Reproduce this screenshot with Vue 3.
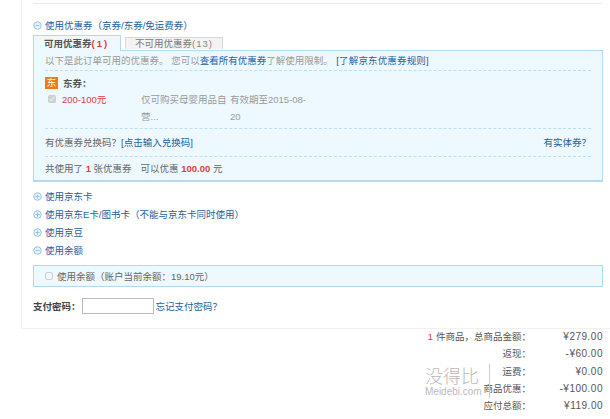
<script setup>
const collapsed = [
  { label: '使用京东卡', open: false },
  { label: '使用京东E卡/图书卡（不能与京东卡同时使用）', open: false },
  { label: '使用京豆', open: false },
  { label: '使用余额', open: true },
]
const totals = [
  { label: '件商品，总商品金额：', count: 1, value: '¥279.00' },
  { label: '返现：', value: '-¥60.00' },
  { label: '运费：', value: '¥0.00' },
  { label: '商品优惠：', value: '-¥100.00' },
  { label: '应付总额：', value: '¥119.00' },
]
</script>

<template>
  <div class="page">
    <div class="card">
      <div class="top-line"></div>

      <div class="toggle first">
        <svg class="sign" viewBox="0 0 10 10"><circle cx="5" cy="5" r="4.2" /><path d="M2.8 5h4.4" /></svg>
        <a>使用优惠券（京券/东券/免运费券）</a>
      </div>

      <div class="tabs">
        <div class="tab active">可用优惠券<b>(1)</b></div>
        <div class="tab">不可用优惠券<span>(13)</span></div>
      </div>

      <div class="panel">
        <div class="row intro">
          以下是此订单可用的优惠券。 您可以<a>查看所有优惠券</a>了解使用限制。 <a class="rules">[了解京东优惠券规则]</a>
        </div>
        <div class="row coupons">
          <div class="coupon-title"><span class="badge">东</span><strong>东券：</strong></div>
          <div class="coupon">
            <input type="checkbox" checked disabled />
            <span class="amount">200-100元</span>
            <span class="desc">仅可购买母婴用品自营...</span>
            <span class="expire">有效期至2015-08-20</span>
          </div>
        </div>
        <div class="row exchange">
          <span>有优惠券兑换码？<a>[点击输入兑换码]</a></span>
          <a>有实体券？</a>
        </div>
        <div class="summary">
          共使用了 <em>1</em> 张优惠券<span class="saving">可以优惠 <em>100.00</em> 元</span>
        </div>
      </div>

      <div class="toggles">
        <div v-for="item in collapsed" :key="item.label" class="toggle">
          <svg class="sign" viewBox="0 0 10 10">
            <circle cx="5" cy="5" r="4.2" />
            <path :d="item.open ? 'M2.8 5h4.4' : 'M2.8 5h4.4M5 2.8v4.4'" />
          </svg>
          <a>{{ item.label }}</a>
        </div>
      </div>

      <div class="balance">
        <input type="checkbox" disabled />
        <span>使用余额（账户当前余额：19.10元）</span>
      </div>

      <div class="password">
        <strong>支付密码：</strong>
        <input type="text" />
        <a>忘记支付密码？</a>
      </div>
    </div>

    <div class="totals">
      <div v-for="row in totals" :key="row.label" class="total-row">
        <span class="total-label"><i v-if="row.count">{{ row.count }}</i>{{ row.label }}</span>
        <span class="total-value">{{ row.value }}</span>
      </div>
      <div class="watermark">
        <div class="wm-brand">没得比</div>
        <div class="wm-url">Meidebi.com</div>
      </div>
    </div>
  </div>
</template>

<style>
html,
body {
  margin: 0;
  background: #fff;
  overflow: hidden;
}
</style>

<style scoped>
.page {
  width: 610px;
  height: 419px;
  overflow: hidden;
  box-sizing: border-box;
  font-family: "Liberation Sans", "Noto Sans CJK SC", sans-serif;
  font-size: 9.5px;
  color: #666;
}

a {
  color: #1d5f9e;
}

.card {
  box-sizing: border-box;
  width: 603px;
  height: 329px;
  margin-left: 21px;
  padding: 3px 0 0 11px;
  border-left: 1px solid #f2f2f2;
  border-bottom: 1px solid #f0f0f0;
}

.top-line {
  height: 1px;
  width: 568px;
  margin-left: 1px;
  background: #e8e8e8;
}

.toggle {
  display: flex;
  align-items: center;
  gap: 3px;
  height: 18px;
}

.toggle.first {
  margin-top: 12px;
}

.sign {
  width: 9px;
  height: 9px;
  fill: #e4f2fa;
  stroke: #8fc0dc;
  stroke-width: 1;
}

.tabs {
  display: flex;
  align-items: flex-end;
  gap: 4px;
  height: 16px;
  position: relative;
  z-index: 1;
}

.tab {
  box-sizing: border-box;
  width: 98px;
  height: 12px;
  line-height: 12px;
  margin-bottom: 1px;
  padding-left: 9px;
  background: #f3f3f3;
  border: 1px solid #d8d8d8;
  border-bottom: 0;
  color: #777;
}

.tab span {
  color: #888;
  letter-spacing: 1px;
}

.tab.active {
  width: 88px;
  height: 16px;
  line-height: 15px;
  margin-bottom: -1px;
  padding-left: 10px;
  background: #edf9fe;
  border: 1px solid #b5d9ee;
  border-bottom: 0;
  color: #555;
  font-weight: 700;
}

.tab b {
  color: #e4393c;
  letter-spacing: 2px;
}

.panel {
  box-sizing: border-box;
  width: 570px;
  height: 132px;
  padding: 0 11px;
  background: #edf9fe;
  border: 1px solid #b5d9ee;
  border-bottom-width: 2px;
}

.row {
  border-bottom: 1px dashed #b9e0f3;
}

.intro {
  height: 19px;
  line-height: 20px;
  color: #999;
}

.rules {
  margin-left: 1px;
  letter-spacing: 0.15px;
}

.coupons {
  height: 57px;
}

.coupon-title {
  box-sizing: border-box;
  display: flex;
  align-items: center;
  gap: 5px;
  height: 20px;
  padding-top: 3px;
}

.badge {
  width: 13px;
  height: 12px;
  line-height: 12px;
  text-align: center;
  background: #f37a17;
  color: #fff;
}

.coupon-title strong {
  color: #555;
}

.coupon {
  display: flex;
  line-height: 17px;
}

.coupon input {
  width: 8px;
  height: 8px;
  margin: 4px 6px 0 3px;
}

.amount {
  width: 79px;
  color: #e4393c;
}

.desc {
  width: 89px;
  color: #999;
}

.expire {
  width: 82px;
  color: #999;
}

.exchange {
  box-sizing: border-box;
  display: flex;
  justify-content: space-between;
  align-items: center;
  height: 28px;
  padding-bottom: 2px;
}

.summary {
  height: 25px;
  line-height: 23px;
}

.saving {
  margin-left: 9px;
}

.summary em {
  font-style: normal;
  font-weight: 700;
  color: #e4393c;
}

.toggles {
  margin-top: 5px;
}

.balance {
  box-sizing: border-box;
  display: flex;
  align-items: center;
  gap: 4px;
  width: 570px;
  height: 22px;
  margin-top: 6px;
  padding-left: 11px;
  background: #edf9fe;
  border: 1px solid #b5d9ee;
}

.balance input {
  width: 8px;
  height: 8px;
  margin: 0;
}

.password {
  display: flex;
  align-items: center;
  gap: 2px;
  height: 16px;
  margin-top: 11px;
  color: #444;
}

.password strong {
  font-weight: 700;
  margin-right: -1px;
}

.password input {
  box-sizing: border-box;
  width: 72px;
  height: 16px;
  margin: 0;
  padding: 0;
  background: #fff;
  border: 1px solid #bbb;
}

.totals {
  position: relative;
  margin-top: -1px;
}

.total-row {
  display: flex;
  justify-content: flex-end;
  height: 17.3px;
  line-height: 17.3px;
}

.total-label {
  color: #555;
}

.total-label i {
  margin-right: 3px;
  font-style: normal;
  color: #e4393c;
}

.total-value {
  width: 72px;
  margin-right: 7px;
  font-size: 10px;
  text-align: right;
  letter-spacing: 0.5px;
  color: #555;
}

.watermark {
  position: absolute;
  left: 425px;
  top: 36px;
  width: 64px;
  height: 34px;
  border-right: 1px solid #ccc;
  color: #bbb;
  pointer-events: none;
}

.wm-brand {
  font-size: 18px;
  line-height: 22px;
  font-family: "Noto Sans CJK SC", sans-serif;
  font-weight: 300;
  white-space: nowrap;
}

.wm-url {
  font-size: 10px;
  line-height: 11px;
}
</style>
